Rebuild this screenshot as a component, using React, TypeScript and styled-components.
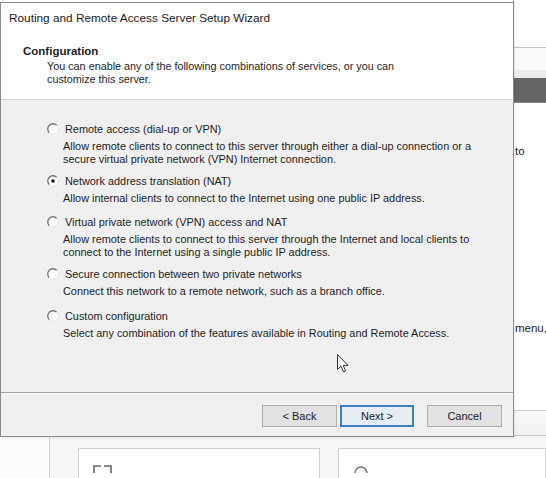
import React from 'react';
import styled, { createGlobalStyle } from 'styled-components';

const GlobalStyle = createGlobalStyle`
  html, body { margin: 0; padding: 0; }
  body {
    width: 546px; height: 478px; overflow: hidden; background: #fff;
    font-family: "Liberation Sans", Arial, sans-serif;
  }
`;

const Screen = styled.div`
  position: relative;
  width: 546px;
  height: 478px;
  overflow: hidden;
  background: #fff;
`;

/* ---------- underlying application window ---------- */
const Backdrop = styled.div`
  display: flex;
  flex-direction: column;
  width: 546px;
  height: 478px;
`;

const BackTop = styled.div`
  display: grid;
  grid-template-columns: 513px 33px;
  height: 436px;
`;

const Hidden = styled.div`
  background: #fff;
`;

const RightStrip = styled.div`
  display: flex;
  flex-direction: column;
  border-left: 1px solid #9a9a9a;
  font-size: 11.5px;
  color: #222;
`;

const Band = styled.div<{ $h: number; $bg: string; $line?: string }>`
  height: ${(p) => p.$h}px;
  background: ${(p) => p.$bg};
  border-bottom: ${(p) => (p.$line ? `1px solid ${p.$line}` : 'none')};
  flex: none;
`;

const StripBody = styled.div`
  flex: 1;
  display: flex;
  flex-direction: column;
  background: #fff;
  padding-left: 1px;
  border-bottom: 1px solid #d2d2d2;
`;

const StripWord = styled.div<{ $top: number }>`
  margin-top: ${(p) => p.$top}px;
  line-height: 14px;
  white-space: nowrap;
`;

const BackBottom = styled.div`
  flex: 1;
  display: flex;
  flex-direction: column;
  background: #f6f6f6;
`;

const BottomLedge = styled.div`
  height: 10px;
  background: #f3f3f3;
  border-bottom: 1px solid #c9c9c9;
`;

const BottomRow = styled.div`
  flex: 1;
  display: grid;
  grid-template-columns: 50px 28px 242px 18px 1fr;
`;

const SideCol = styled.div`
  background: #fbfbfb;
  border-right: 1px solid #cfcfcf;
`;

const Spacer = styled.div``;

const Tile = styled.div`
  margin-top: 12px;
  background: #fff;
  border: 1px solid #cfcfcf;
  border-bottom: none;
  padding: 11px 0 0 14px;
  overflow: hidden;
`;

/* ---------- wizard dialog (window over desktop) ---------- */
const Dialog = styled.div`
  position: absolute;
  left: 0;
  top: 2px;
  width: 512px;
  height: 433px;
  border: 1px solid #8c8c8c;
  background: #f0f0f0;
  display: flex;
  flex-direction: column;
  color: #1e1e1e;
  box-shadow: 1px 1px 2px rgba(0, 0, 0, 0.08);
`;

const Header = styled.div`
  height: 96px;
  background: #fff;
  border-bottom: 1px solid #d6d6d6;
  display: flex;
  flex-direction: column;
  flex: none;
`;

const WindowTitle = styled.div`
  padding: 7px 0 0 8px;
  font-size: 11.8px;
  line-height: 16px;
  color: #1b1b1b;
`;

const PageTitle = styled.div`
  margin: 18px 0 0 22px;
  font-size: 11.5px;
  font-weight: bold;
  line-height: 14px;
`;

const PageSubtitle = styled.div`
  margin: 2px 0 0 46px;
  font-size: 10.8px;
  line-height: 13px;
  width: 360px;
`;

const Body = styled.div`
  flex: 1;
  padding: 22px 0 0 46px;
  display: flex;
  flex-direction: column;
  position: relative;
`;

const Option = styled.div<{ $after: number }>`
  display: flex;
  flex-direction: column;
  margin-bottom: ${(p) => p.$after}px;
`;

const OptionRow = styled.div`
  display: flex;
  align-items: center;
  gap: 6px;
  height: 14px;
`;

const OptionLabel = styled.span`
  font-size: 10.9px;
  line-height: 14px;
`;

const OptionDesc = styled.div`
  margin: 4px 0 0 16px;
  font-size: 10.9px;
  line-height: 13px;
  width: 430px;
`;

const Cursor = styled.svg`
  position: absolute;
  left: 336px;
  top: 254px;
`;

const Footer = styled.div`
  height: 44px;
  flex: none;
  border-top: 1px solid #a3a3a3;
  box-shadow: inset 0 1px 0 #fafafa;
  display: flex;
  justify-content: flex-end;
  align-items: flex-start;
  padding: 12px 11px 0 0;
  box-sizing: border-box;
`;

const Button = styled.button<{ $primary?: boolean; $gap: number }>`
  width: ${(p) => (p.$primary ? 74 : 75)}px;
  height: 22px;
  margin-left: ${(p) => p.$gap}px;
  font-family: "Liberation Sans", Arial, sans-serif;
  font-size: 11px;
  color: #1b1b1b;
  background: ${(p) => (p.$primary ? '#e6edf3' : '#e1e1e1')};
  border: ${(p) => (p.$primary ? '2px solid #3d7fbe' : '1px solid #adadad')};
  padding: 0;
  cursor: default;
`;

const Radio: React.FC<{ checked?: boolean }> = ({ checked }) => (
  <svg width="12" height="12" viewBox="0 0 12 12">
    <circle cx="6" cy="6" r="5.2" fill="#fff" />
    <path d="M9.7 2.3 A5.2 5.2 0 0 0 2.3 9.7" fill="none" stroke="#6f6f6f" strokeWidth="1.3" />
    <path d="M2.3 9.7 A5.2 5.2 0 0 0 9.7 2.3" fill="none" stroke="#e4e4e4" strokeWidth="1" />
    {checked && <circle cx="6" cy="6" r="1.7" fill="#111" />}
  </svg>
);

const options = [
  {
    label: 'Remote access (dial-up or VPN)',
    desc: 'Allow remote clients to connect to this server through either a dial-up connection or a secure virtual private network (VPN) Internet connection.',
    after: 8,
  },
  {
    label: 'Network address translation (NAT)',
    desc: 'Allow internal clients to connect to the Internet using one public IP address.',
    checked: true,
    after: 10,
  },
  {
    label: 'Virtual private network (VPN) access and NAT',
    desc: 'Allow remote clients to connect to this server through the Internet and local clients to connect to the Internet using a single public IP address.',
    after: 8,
  },
  {
    label: 'Secure connection between two private networks',
    desc: 'Connect this network to a remote network, such as a branch office.',
    after: 11,
  },
  {
    label: 'Custom configuration',
    desc: 'Select any combination of the features available in Routing and Remote Access.',
    after: 0,
  },
];

export default function App() {
  return (
    <Screen>
      <GlobalStyle />
      <Backdrop>
        <BackTop>
          <Hidden />
          <RightStrip>
            <Band $h={47} $bg="#fff" $line="#c6c6c6" />
            <Band $h={22} $bg="#fafafa" />
            <Band $h={8} $bg="#ececec" />
            <Band $h={24} $bg="#656565" $line="#8a8a8a" />
            <StripBody>
              <StripWord $top={41}>to</StripWord>
              <StripWord $top={163}>menu,</StripWord>
            </StripBody>
            <Band $h={14} $bg="#f7f7f7" />
          </RightStrip>
        </BackTop>
        <BackBottom>
          <BottomLedge />
          <BottomRow>
            <SideCol />
            <Spacer />
            <Tile>
              <svg width="20" height="10" viewBox="0 0 20 10">
                <path d="M1 9 V2 H8 M11 2 H18 V9" fill="none" stroke="#666" strokeWidth="1.6" />
              </svg>
            </Tile>
            <Spacer />
            <Tile>
              <svg width="16" height="10" viewBox="0 0 16 10">
                <path d="M2 9 A6 6 0 0 1 14 9" fill="none" stroke="#777" strokeWidth="1.6" />
              </svg>
            </Tile>
          </BottomRow>
        </BackBottom>
      </Backdrop>

      <Dialog>
        <Header>
          <WindowTitle>Routing and Remote Access Server Setup Wizard</WindowTitle>
          <PageTitle>Configuration</PageTitle>
          <PageSubtitle>
            You can enable any of the following combinations of services, or you can customize this server.
          </PageSubtitle>
        </Header>
        <Body>
          {options.map((o) => (
            <Option key={o.label} $after={o.after}>
              <OptionRow>
                <Radio checked={o.checked} />
                <OptionLabel>{o.label}</OptionLabel>
              </OptionRow>
              <OptionDesc>{o.desc}</OptionDesc>
            </Option>
          ))}
          <Cursor width="12" height="19" viewBox="0 0 12 19">
            <path
              d="M0.5 0.5 L0.5 15.5 L4 12.2 L6.5 17.8 L8.6 16.9 L6.2 11.4 L11 11.4 Z"
              fill="#fff"
              stroke="#333"
              strokeWidth="1"
              strokeLinejoin="round"
            />
          </Cursor>
        </Body>
        <Footer>
          <Button $gap={0}>&lt; Back</Button>
          <Button $gap={3} $primary>
            Next &gt;
          </Button>
          <Button $gap={13}>Cancel</Button>
        </Footer>
      </Dialog>
    </Screen>
  );
}
